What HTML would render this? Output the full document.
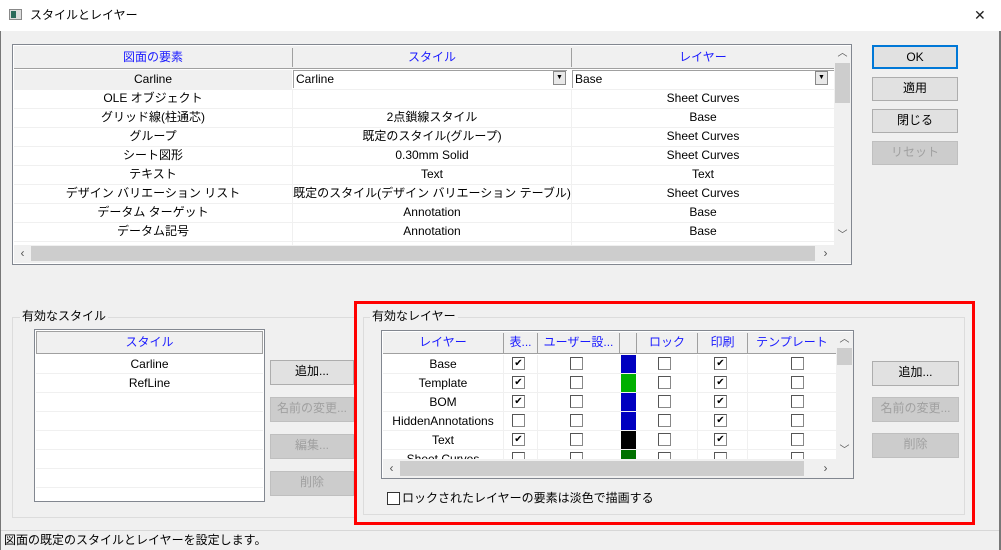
<!DOCTYPE html>
<html><head><meta charset="utf-8"><style>
*{box-sizing:border-box;margin:0;padding:0}
body{width:1001px;height:550px;background:#f0f0f0;font-family:"Liberation Sans","Noto Sans CJK JP",sans-serif;font-size:12px;color:#000;position:relative;overflow:hidden}
.a{position:absolute}
.t{position:absolute;white-space:nowrap;line-height:19px;text-align:center}
.btn{position:absolute;border:1px solid #adadad;background:#e1e1e1;text-align:center;line-height:21px}
.dis{color:#a0a0a0;background:#cccccc;border-color:#bfbfbf}
.hl{position:absolute;height:1px;background:#f0f0f0}
.vl{position:absolute;width:1px;background:#f0f0f0}
.cb{position:absolute;width:13px;height:13px;border:1px solid #888;border-top-color:#555;border-left-color:#555;background:#fff;font-size:10px;line-height:11px;text-align:center}
.hd{color:#1a1aff}
</style></head><body>
<div class="a" style="left:0;top:0;width:1001px;height:31px;background:#fff"></div>
<div class="a" style="left:9px;top:9px;width:13px;height:11px;border:1px solid #888;background:#ddd"><div class="a" style="left:1px;top:1px;width:5px;height:7px;background:#2a6a5a"></div></div>
<div class="t" style="left:30px;top:6px;text-align:left">スタイルとレイヤー</div>
<div class="t" style="left:974px;top:6px;font-size:14px;color:#222">✕</div>
<div class="a" style="left:0;top:31px;width:1px;height:519px;background:#777"></div>
<div class="a" style="left:999px;top:31px;width:2px;height:519px;background:#777"></div>

<div class="a" style="left:12px;top:44px;width:840px;height:221px;border:1px solid #828790;background:#fff"></div>
<div class="a" style="left:14px;top:46px;width:820px;height:23px;background:#f0f0f0;border-bottom:1px solid #a0a0a0"></div>
<div class="a" style="left:292px;top:48px;width:1px;height:19px;background:#a0a0a0"></div>
<div class="a" style="left:571px;top:48px;width:1px;height:19px;background:#a0a0a0"></div>
<div class="t hd" style="left:14px;top:48px;width:278px">図面の要素</div>
<div class="t hd" style="left:293px;top:48px;width:278px">スタイル</div>
<div class="t hd" style="left:572px;top:48px;width:262px">レイヤー</div>
<div class="a" style="left:14px;top:70px;width:278px;height:19px;background:#f0f0f0"></div>
<div class="a" style="left:293px;top:70px;width:274px;height:18px;border-left:1px solid #a0a0a0;border-top:1px solid #a0a0a0"></div>
<div class="a" style="left:572px;top:70px;width:262px;height:18px;border-left:1px solid #a0a0a0;border-top:1px solid #a0a0a0"></div>
<div class="a" style="left:553px;top:71px;width:13px;height:14px;border:1px solid #888;background:#e8e8e8;font-size:7px;text-align:center;line-height:12px">▼</div>
<div class="a" style="left:815px;top:71px;width:13px;height:14px;border:1px solid #888;background:#e8e8e8;font-size:7px;text-align:center;line-height:12px">▼</div>
<div class="t" style="left:14px;top:70px;width:278px">Carline</div>
<div class="t" style="left:296px;top:70px;text-align:left">Carline</div>
<div class="t" style="left:575px;top:70px;text-align:left">Base</div>
<div class="hl" style="left:14px;top:89px;width:820px"></div>
<div class="hl" style="left:14px;top:108px;width:820px"></div>
<div class="hl" style="left:14px;top:127px;width:820px"></div>
<div class="hl" style="left:14px;top:146px;width:820px"></div>
<div class="hl" style="left:14px;top:165px;width:820px"></div>
<div class="hl" style="left:14px;top:184px;width:820px"></div>
<div class="hl" style="left:14px;top:203px;width:820px"></div>
<div class="hl" style="left:14px;top:222px;width:820px"></div>
<div class="hl" style="left:14px;top:241px;width:820px"></div>
<div class="vl" style="left:292px;top:89px;height:156px"></div>
<div class="vl" style="left:571px;top:89px;height:156px"></div>
<div class="t" style="left:14px;top:89px;width:278px">OLE オブジェクト</div>
<div class="t" style="left:572px;top:89px;width:262px">Sheet Curves</div>
<div class="t" style="left:14px;top:108px;width:278px">グリッド線(柱通芯)</div>
<div class="t" style="left:293px;top:108px;width:278px">2点鎖線スタイル</div>
<div class="t" style="left:572px;top:108px;width:262px">Base</div>
<div class="t" style="left:14px;top:127px;width:278px">グループ</div>
<div class="t" style="left:293px;top:127px;width:278px">既定のスタイル(グループ)</div>
<div class="t" style="left:572px;top:127px;width:262px">Sheet Curves</div>
<div class="t" style="left:14px;top:146px;width:278px">シート図形</div>
<div class="t" style="left:293px;top:146px;width:278px">0.30mm Solid</div>
<div class="t" style="left:572px;top:146px;width:262px">Sheet Curves</div>
<div class="t" style="left:14px;top:165px;width:278px">テキスト</div>
<div class="t" style="left:293px;top:165px;width:278px">Text</div>
<div class="t" style="left:572px;top:165px;width:262px">Text</div>
<div class="t" style="left:14px;top:184px;width:278px">デザイン バリエーション リスト</div>
<div class="t" style="left:293px;top:184px;width:278px">既定のスタイル(デザイン バリエーション テーブル)</div>
<div class="t" style="left:572px;top:184px;width:262px">Sheet Curves</div>
<div class="t" style="left:14px;top:203px;width:278px">データム ターゲット</div>
<div class="t" style="left:293px;top:203px;width:278px">Annotation</div>
<div class="t" style="left:572px;top:203px;width:262px">Base</div>
<div class="t" style="left:14px;top:222px;width:278px">データム記号</div>
<div class="t" style="left:293px;top:222px;width:278px">Annotation</div>
<div class="t" style="left:572px;top:222px;width:262px">Base</div>
<div class="a" style="left:834px;top:46px;width:17px;height:199px;background:#f0f0f0"></div>
<div class="a" style="left:835px;top:63px;width:15px;height:40px;background:#cdcdcd"></div>
<div class="t" style="left:834px;top:44px;width:17px;font-size:10px;color:#555">︿</div>
<div class="t" style="left:834px;top:226px;width:17px;font-size:10px;color:#555">﹀</div>
<div class="a" style="left:14px;top:245px;width:837px;height:18px;background:#f0f0f0"></div>
<div class="a" style="left:31px;top:246px;width:784px;height:15px;background:#cdcdcd"></div>
<div class="t" style="left:14px;top:244px;width:17px;color:#555">‹</div>
<div class="t" style="left:817px;top:244px;width:17px;color:#555">›</div>

<div class="btn" style="left:872px;top:45px;width:86px;height:24px;border:2px solid #0078d7;line-height:20px">OK</div>
<div class="btn" style="left:872px;top:77px;width:86px;height:24px">適用</div>
<div class="btn" style="left:872px;top:109px;width:86px;height:24px">閉じる</div>
<div class="btn dis" style="left:872px;top:141px;width:86px;height:24px">リセット</div>

<div class="a" style="left:12px;top:317px;width:345px;height:201px;border:1px solid #dcdcdc"></div>
<div class="t" style="left:20px;top:307px;background:#f0f0f0;padding:0 2px">有効なスタイル</div>
<div class="a" style="left:34px;top:329px;width:231px;height:173px;border:1px solid #828790;background:#fff"></div>
<div class="a" style="left:36px;top:331px;width:227px;height:23px;background:#f0f0f0;border:1px solid #a0a0a0"></div>
<div class="t hd" style="left:36px;top:333px;width:227px">スタイル</div>
<div class="t" style="left:36px;top:355px;width:227px">Carline</div>
<div class="t" style="left:36px;top:374px;width:227px">RefLine</div>
<div class="hl" style="left:36px;top:373px;width:227px"></div>
<div class="hl" style="left:36px;top:392px;width:227px"></div>
<div class="hl" style="left:36px;top:411px;width:227px"></div>
<div class="hl" style="left:36px;top:430px;width:227px"></div>
<div class="hl" style="left:36px;top:449px;width:227px"></div>
<div class="hl" style="left:36px;top:468px;width:227px"></div>
<div class="hl" style="left:36px;top:487px;width:227px"></div>
<div class="btn" style="left:270px;top:360px;width:84px;height:25px">追加...</div>
<div class="btn dis" style="left:270px;top:397px;width:84px;height:25px">名前の変更...</div>
<div class="btn dis" style="left:270px;top:434px;width:84px;height:25px">編集...</div>
<div class="btn dis" style="left:270px;top:471px;width:84px;height:25px">削除</div>

<div class="a" style="left:363px;top:317px;width:602px;height:198px;border:1px solid #dcdcdc"></div>
<div class="t" style="left:370px;top:307px;background:#f0f0f0;padding:0 2px">有効なレイヤー</div>
<div class="a" style="left:381px;top:330px;width:473px;height:149px;border:1px solid #828790;background:#fff"></div>
<div class="a" style="left:383px;top:332px;width:453px;height:22px;background:#f0f0f0;border-bottom:1px solid #a0a0a0"></div>
<div class="a" style="left:503px;top:333px;width:1px;height:20px;background:#a0a0a0"></div>
<div class="a" style="left:537px;top:333px;width:1px;height:20px;background:#a0a0a0"></div>
<div class="a" style="left:619px;top:333px;width:1px;height:20px;background:#a0a0a0"></div>
<div class="a" style="left:636px;top:333px;width:1px;height:20px;background:#a0a0a0"></div>
<div class="a" style="left:697px;top:333px;width:1px;height:20px;background:#a0a0a0"></div>
<div class="a" style="left:747px;top:333px;width:1px;height:20px;background:#a0a0a0"></div>
<div class="t hd" style="left:383px;top:333px;width:120px">レイヤー</div>
<div class="t hd" style="left:504px;top:333px;width:33px">表...</div>
<div class="t hd" style="left:538px;top:333px;width:81px">ユーザー設...</div>
<div class="t hd" style="left:637px;top:333px;width:60px">ロック</div>
<div class="t hd" style="left:698px;top:333px;width:49px">印刷</div>
<div class="t hd" style="left:748px;top:333px;width:88px">テンプレート</div>
<div class="hl" style="left:383px;top:373px;width:453px"></div>
<div class="hl" style="left:383px;top:392px;width:453px"></div>
<div class="hl" style="left:383px;top:411px;width:453px"></div>
<div class="hl" style="left:383px;top:430px;width:453px"></div>
<div class="hl" style="left:383px;top:449px;width:453px"></div>
<div class="vl" style="left:503px;top:355px;height:104px"></div>
<div class="vl" style="left:537px;top:355px;height:104px"></div>
<div class="vl" style="left:697px;top:355px;height:104px"></div>
<div class="vl" style="left:747px;top:355px;height:104px"></div>
<div class="t" style="left:383px;top:355px;width:120px">Base</div>
<div class="t" style="left:383px;top:374px;width:120px">Template</div>
<div class="t" style="left:383px;top:393px;width:120px">BOM</div>
<div class="t" style="left:383px;top:412px;width:120px">HiddenAnnotations</div>
<div class="t" style="left:383px;top:431px;width:120px">Text</div>
<div class="t" style="left:383px;top:450px;width:120px;height:9px;overflow:hidden;line-height:19px">Sheet Curves</div>
<div class="a" style="left:621px;top:355px;width:15px;height:18px;background:#0000c0"></div>
<div class="a" style="left:621px;top:374px;width:15px;height:18px;background:#00b000"></div>
<div class="a" style="left:621px;top:393px;width:15px;height:18px;background:#0000c0"></div>
<div class="a" style="left:621px;top:412px;width:15px;height:18px;background:#0000c0"></div>
<div class="a" style="left:621px;top:431px;width:15px;height:18px;background:#000"></div>
<div class="a" style="left:621px;top:450px;width:15px;height:9px;background:#007000"></div>
<div class="cb" style="left:512px;top:357px">✔</div><div class="cb" style="left:570px;top:357px"></div><div class="cb" style="left:658px;top:357px"></div><div class="cb" style="left:714px;top:357px">✔</div><div class="cb" style="left:791px;top:357px"></div>
<div class="cb" style="left:512px;top:376px">✔</div><div class="cb" style="left:570px;top:376px"></div><div class="cb" style="left:658px;top:376px"></div><div class="cb" style="left:714px;top:376px">✔</div><div class="cb" style="left:791px;top:376px"></div>
<div class="cb" style="left:512px;top:395px">✔</div><div class="cb" style="left:570px;top:395px"></div><div class="cb" style="left:658px;top:395px"></div><div class="cb" style="left:714px;top:395px">✔</div><div class="cb" style="left:791px;top:395px"></div>
<div class="cb" style="left:512px;top:414px"></div><div class="cb" style="left:570px;top:414px"></div><div class="cb" style="left:658px;top:414px"></div><div class="cb" style="left:714px;top:414px">✔</div><div class="cb" style="left:791px;top:414px"></div>
<div class="cb" style="left:512px;top:433px">✔</div><div class="cb" style="left:570px;top:433px"></div><div class="cb" style="left:658px;top:433px"></div><div class="cb" style="left:714px;top:433px">✔</div><div class="cb" style="left:791px;top:433px"></div>
<div class="cb" style="left:512px;top:452px;height:7px;border-bottom:none"></div><div class="cb" style="left:570px;top:452px;height:7px;border-bottom:none"></div><div class="cb" style="left:658px;top:452px;height:7px;border-bottom:none"></div><div class="cb" style="left:714px;top:452px;height:7px;border-bottom:none"></div><div class="cb" style="left:791px;top:452px;height:7px;border-bottom:none"></div>
<div class="a" style="left:836px;top:332px;width:17px;height:127px;background:#f0f0f0"></div>
<div class="a" style="left:837px;top:348px;width:15px;height:17px;background:#cdcdcd"></div>
<div class="t" style="left:836px;top:330px;width:17px;font-size:10px;color:#555">︿</div>
<div class="t" style="left:836px;top:441px;width:17px;font-size:10px;color:#555">﹀</div>
<div class="a" style="left:383px;top:459px;width:470px;height:19px;background:#f0f0f0"></div>
<div class="a" style="left:400px;top:461px;width:404px;height:15px;background:#cdcdcd"></div>
<div class="t" style="left:383px;top:459px;width:17px;color:#555">‹</div>
<div class="t" style="left:817px;top:459px;width:17px;color:#555">›</div>
<div class="cb" style="left:387px;top:492px;border-color:#333"></div>
<div class="t" style="left:402px;top:489px;text-align:left">ロックされたレイヤーの要素は淡色で描画する</div>
<div class="btn" style="left:872px;top:361px;width:87px;height:25px">追加...</div>
<div class="btn dis" style="left:872px;top:397px;width:87px;height:25px">名前の変更...</div>
<div class="btn dis" style="left:872px;top:433px;width:87px;height:25px">削除</div>
<div class="a" style="left:354px;top:301px;width:621px;height:224px;border:3px solid #ff0000"></div>
<div class="a" style="left:1px;top:530px;width:998px;height:1px;background:#d7d7d7"></div>
<div class="t" style="left:4px;top:531px;text-align:left">図面の既定のスタイルとレイヤーを設定します。</div>
</body></html>
